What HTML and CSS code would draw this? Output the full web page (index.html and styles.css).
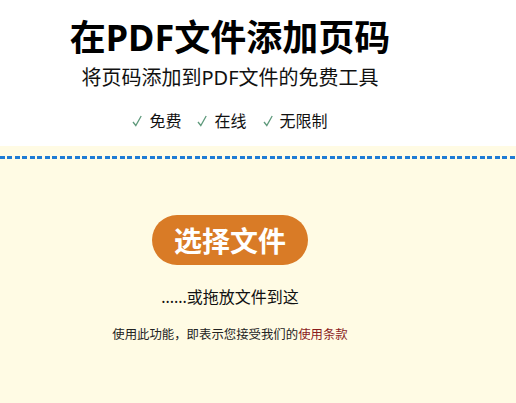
FILE: index.html
```html
<!DOCTYPE html>
<html lang="zh">
<head>
<meta charset="utf-8">
<title>在PDF文件添加页码</title>
<link rel="stylesheet" href="styles.css">
</head>
<body>
<header class="hero">
  <div class="inner">
    <h1 class="title">在PDF文件添加页码</h1>
    <p class="subtitle">将页码添加到PDF文件的免费工具</p>
    <ul class="features">
      <li><svg class="check" viewBox="0 0 10 12" width="10" height="12"><path d="M1 7 L3.8 10.5 L9.2 1" fill="none" stroke="#5f9a7c" stroke-width="1.3"/></svg>免费</li>
      <li><svg class="check" viewBox="0 0 10 12" width="10" height="12"><path d="M1 7 L3.8 10.5 L9.2 1" fill="none" stroke="#5f9a7c" stroke-width="1.3"/></svg>在线</li>
      <li><svg class="check" viewBox="0 0 10 12" width="10" height="12"><path d="M1 7 L3.8 10.5 L9.2 1" fill="none" stroke="#5f9a7c" stroke-width="1.3"/></svg>无限制</li>
    </ul>
  </div>
</header>
<main class="drop">
  <div class="dashes"></div>
  <div class="inner">
    <button class="pick">选择文件</button>
    <p class="hint">......或拖放文件到这</p>
    <p class="terms">使用此功能，即表示您接受我们的<a href="#" class="link">使用条款</a></p>
  </div>
</main>
</body>
</html>
```
FILE: styles.css
```css
html, body {
  margin: 0;
  padding: 0;
  height: 100%;
}
body {
  font-family: "Noto Sans", "Noto Sans CJK SC", sans-serif;
  color: #111;
  background: #fffbe4;
  display: flex;
  flex-direction: column;
}
.inner {
  width: 460px;
  display: flex;
  flex-direction: column;
  align-items: center;
}
.hero {
  background: #fff;
  height: 146px;
}
.title {
  margin: 14px 0 0;
  font-size: 36px;
  line-height: 48px;
  font-weight: 700;
  color: #000;
}
.subtitle {
  margin: 2px 0 0;
  font-size: 20px;
  line-height: 28px;
  color: #111;
}
.features {
  list-style: none;
  margin: 17px 0 0;
  padding: 0;
  display: flex;
  gap: 16px;
  font-size: 16px;
  line-height: 24px;
}
.features li {
  display: flex;
  align-items: center;
  gap: 7px;
}
.check {
  display: block;
}
.drop {
  flex: 1;
  background: #fffbe4;
  padding-top: 10px;
}
.dashes {
  height: 3px;
  background: repeating-linear-gradient(90deg, #1f7bd4 0 5px, transparent 5px 7.5px);
}
.pick {
  margin-top: 56px;
  height: 50px;
  padding: 0 22px;
  border: none;
  border-radius: 25px;
  background: #d97b26;
  color: #fff;
  font-family: "Noto Sans CJK SC", sans-serif;
  font-size: 28px;
  font-weight: 700;
  line-height: 50px;
}
.hint {
  margin: 20px 0 0;
  font-size: 16px;
  line-height: 24px;
  color: #111;
}
.terms {
  margin: 17px 0 0;
  font-size: 12.4px;
  line-height: 18px;
  color: #222;
}
.link {
  color: #8a1c1c;
  text-decoration: none;
}
```
